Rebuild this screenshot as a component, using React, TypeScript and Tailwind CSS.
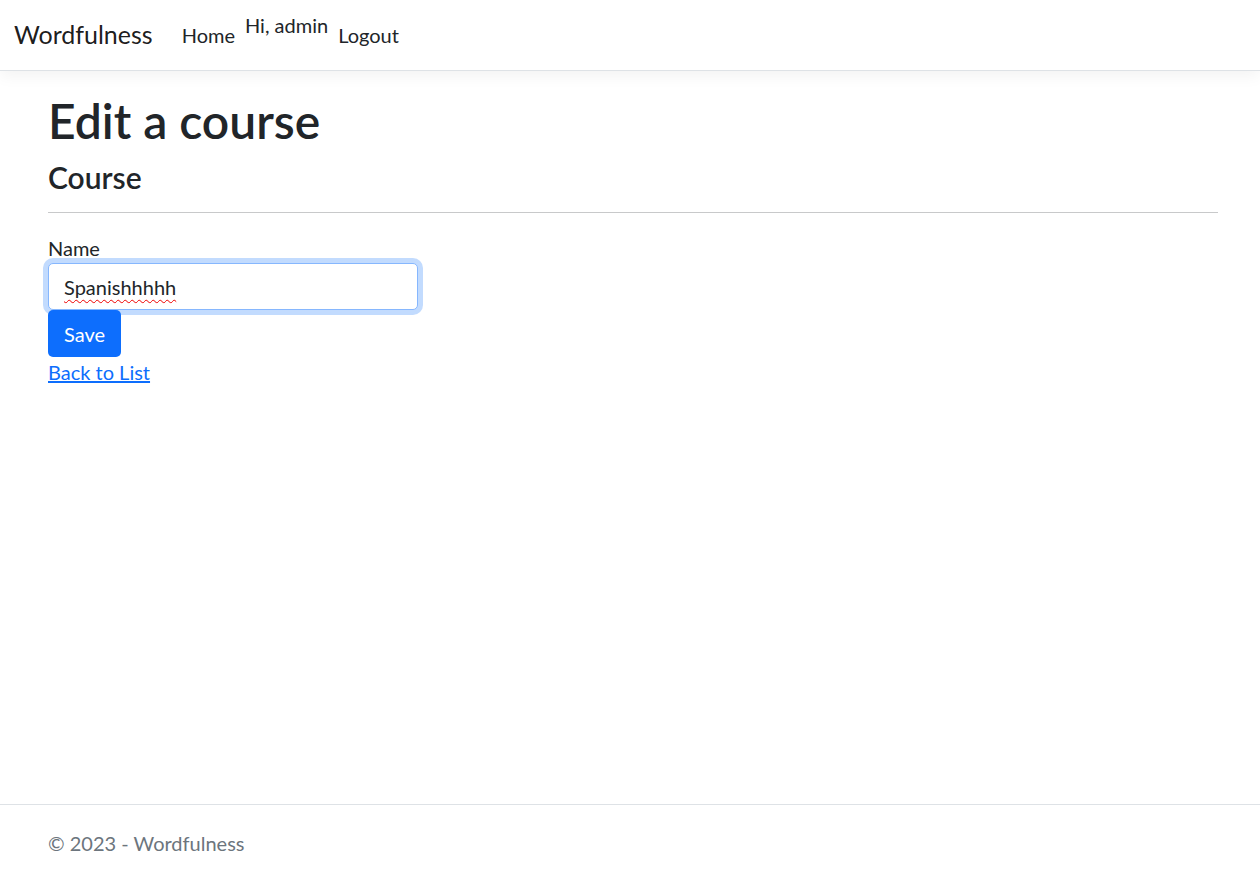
import React from "react";

export default function App() {
  const font = { fontFamily: 'Lato, "Noto Sans", sans-serif' };
  return (
    <div className="min-h-screen flex flex-col bg-white text-[#212529]" style={font}>
      <header>
        <nav className="h-[71px] border-b border-[#dee2e6] shadow-[0_5px_15px_rgba(0,0,0,0.05)] flex items-start pl-[14px] pr-[15px] py-[10px]">
          <a className="text-[25px] leading-[37.5px] py-[6.25px] mr-[19px] text-black/90">Wordfulness</a>
          <ul className="flex">
            <li>
              <a className="block px-[10px] py-[10px] text-[20px] leading-[30px] text-[#212529]">Home</a>
            </li>
            <li className="text-[20px] leading-[30px] text-[#212529]">Hi, admin</li>
            <li>
              <button className="block px-[10px] py-[10px] text-[20px] leading-[30px] text-[#212529]">Logout</button>
            </li>
          </ul>
        </nav>
      </header>

      <main className="flex-1 pl-[48px] pt-[20px] w-[1218px]">
        <h1 className="text-[48px] leading-[60px] font-semibold mb-[8px]">Edit a course</h1>
        <h4 className="text-[30px] leading-[36px] font-semibold">Course</h4>
        <hr className="mt-[17px] mb-[20px] border-t border-[#c8c9ca]" />
        <div className="w-[370px]">
          <label className="block text-[20px] leading-[30px]">Name</label>
          <div className="h-[47px] rounded-[5px] border border-[#86b7fe] shadow-[0_0_0_5px_rgba(13,110,253,0.25)] px-[15px] flex items-center text-[20px] leading-[30px] bg-white">
            <span className="underline decoration-wavy decoration-[#e00] decoration-1 underline-offset-[4px]">Spanishhhhh</span>
          </div>
          <button className="h-[47px] px-[16px] rounded-[5px] bg-[#0d6efd] text-white text-[20px] leading-[30px]">Save</button>
        </div>
        <div className="text-[20px] leading-[30px]">
          <a className="text-[#0d6efd] underline">Back to List</a>
        </div>
      </main>

      <footer className="h-[69px] border-t border-[#dee2e6] pl-[48px] flex items-center pt-[8px] text-[20px] text-[#6c757d]">
        © 2023 - Wordfulness
      </footer>
    </div>
  );
}
